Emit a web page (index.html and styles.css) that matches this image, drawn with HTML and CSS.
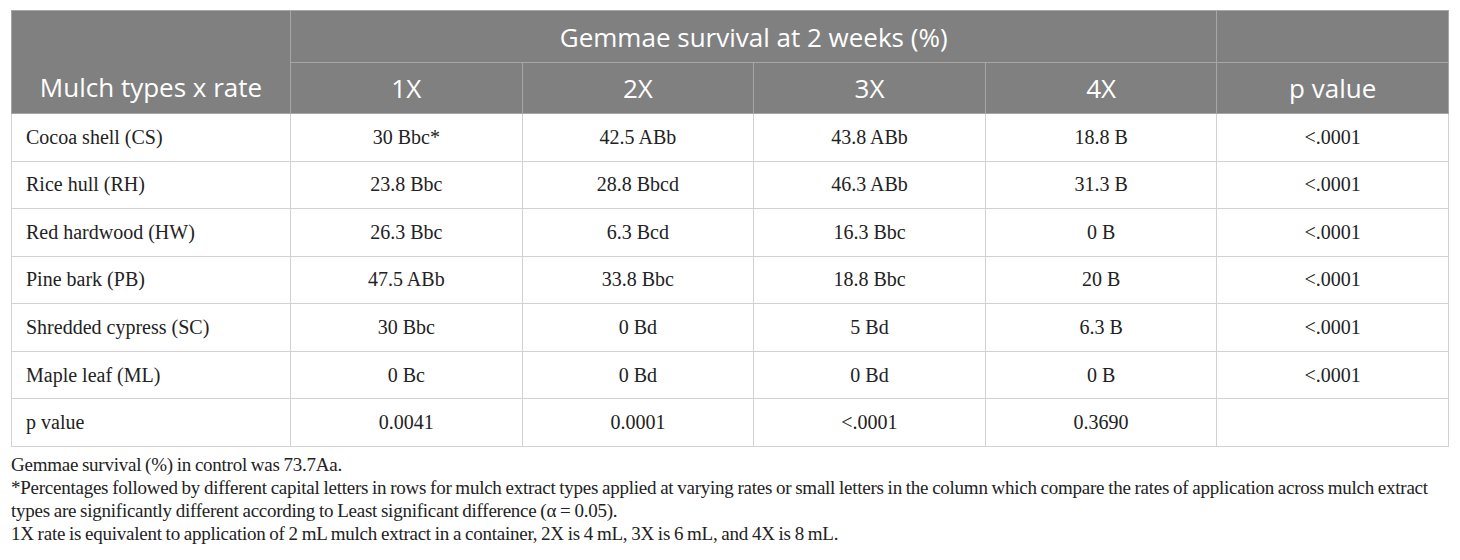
FILE: index.html
```html
<!DOCTYPE html>
<html>

<head>
    <meta charset="utf-8" />
    <title>Gemmae survival</title>
    <link rel="stylesheet" href="styles.css">
</head>

<body>
    <div class="tableBox">
        <table class="data">
            <thead>
                <tr class="top">
                    <th rowspan="2" class="first">Mulch types x rate</th>
                    <th colspan="4" class="group">Gemmae survival at 2 weeks (%)</th>
                    <th class="blank"></th>
                </tr>
                <tr class="sub">
                    <th>1X</th>
                    <th>2X</th>
                    <th>3X</th>
                    <th>4X</th>
                    <th>p value</th>
                </tr>
            </thead>
            <tbody>
                <tr>
                    <td>Cocoa shell (CS)</td>
                    <td>30 Bbc*</td>
                    <td>42.5 ABb</td>
                    <td>43.8 ABb</td>
                    <td>18.8 B</td>
                    <td>&lt;.0001</td>
                </tr>
                <tr>
                    <td>Rice hull (RH)</td>
                    <td>23.8 Bbc</td>
                    <td>28.8 Bbcd</td>
                    <td>46.3 ABb</td>
                    <td>31.3 B</td>
                    <td>&lt;.0001</td>
                </tr>
                <tr>
                    <td>Red hardwood (HW)</td>
                    <td>26.3 Bbc</td>
                    <td>6.3 Bcd</td>
                    <td>16.3 Bbc</td>
                    <td>0 B</td>
                    <td>&lt;.0001</td>
                </tr>
                <tr>
                    <td>Pine bark (PB)</td>
                    <td>47.5 ABb</td>
                    <td>33.8 Bbc</td>
                    <td>18.8 Bbc</td>
                    <td>20 B</td>
                    <td>&lt;.0001</td>
                </tr>
                <tr>
                    <td>Shredded cypress (SC)</td>
                    <td>30 Bbc</td>
                    <td>0 Bd</td>
                    <td>5 Bd</td>
                    <td>6.3 B</td>
                    <td>&lt;.0001</td>
                </tr>
                <tr>
                    <td>Maple leaf (ML)</td>
                    <td>0 Bc</td>
                    <td>0 Bd</td>
                    <td>0 Bd</td>
                    <td>0 B</td>
                    <td>&lt;.0001</td>
                </tr>
                <tr>
                    <td>p value</td>
                    <td>0.0041</td>
                    <td>0.0001</td>
                    <td>&lt;.0001</td>
                    <td>0.3690</td>
                    <td></td>
                </tr>
            </tbody>
        </table>
        <!-- 表格下方的注释 -->
        <div class="notes">
            <p>Gemmae survival (%) in control was 73.7Aa.</p>
            <p>*Percentages followed by different capital letters in rows for mulch extract types applied at varying rates or small letters in the column which compare the rates of application across mulch extract types are significantly different according to Least significant difference (α = 0.05).</p>
            <p>1X rate is equivalent to application of 2 mL mulch extract in a container, 2X is 4 mL, 3X is 6 mL, and 4X is 8 mL.</p>
        </div>
    </div>
</body>

</html>
```

FILE: styles.css
```css
body {
    margin: 0;
    background-color: #fff;
}

.tableBox {
    width: 1438px;
    padding: 10px 0 0 11px;
}

.tableBox .data {
    width: 1438px;
    border-collapse: collapse;
    table-layout: fixed;
}

.tableBox .data th {
    background-color: #808080;
    color: #fff;
    font-family: "Open Sans", "Noto Sans", sans-serif;
    font-size: 26px;
    font-weight: 400;
    border: 1px solid #a6a6a6;
    padding: 0;
}

.tableBox .data tr.top {
    height: 52px;
}

.tableBox .data tr.sub {
    height: 51px;
}

.tableBox .data th.first {
    width: 278px;
    vertical-align: bottom;
    padding-bottom: 8px;
}

.tableBox .data td {
    height: 46.57px;
    padding: 0;
    border: 1px solid #d2d2d2;
    font-family: "Liberation Serif", "DejaVu Serif", serif;
    font-size: 20px;
    color: #222;
    text-align: center;
}

.tableBox .data td:first-child {
    text-align: left;
    padding-left: 14px;
}

.tableBox .notes {
    margin-top: 6px;
    font-family: "Liberation Serif", "DejaVu Serif", serif;
    font-size: 19px;
    letter-spacing: -0.25px;
    word-spacing: -0.6px;
    line-height: 23px;
    color: #222;
}

.tableBox .notes p {
    margin: 0;
}
```
